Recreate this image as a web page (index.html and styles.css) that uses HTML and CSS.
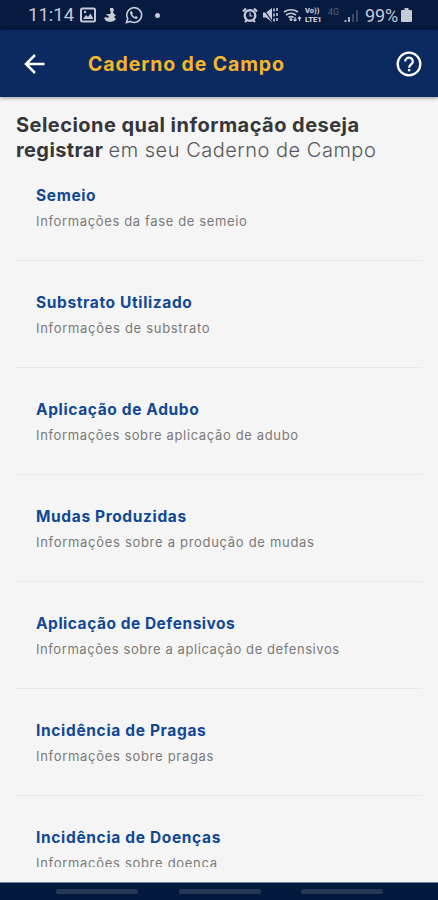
FILE: index.html
```html
<!DOCTYPE html>
<html lang="pt-BR">
<head>
<meta charset="utf-8">
<title>Caderno de Campo</title>
<link rel="stylesheet" href="styles.css">
</head>
<body>
<div class="screen">
  <div class="status">
    <span class="clock">11:14</span>
    <svg class="picture" width="16" height="16" viewBox="0 0 16 16"><rect x="1" y="1.5" width="14" height="13" rx="1.5" fill="none" stroke="currentColor" stroke-width="2"/><path d="M3 12l3-4 2 2 2.500-3.500L13.500 12z" fill="currentColor"/><circle cx="5" cy="5" r="1.200" fill="currentColor"/></svg>
    <svg class="figure" width="13" height="16" viewBox="0 0 13 16"><path d="M6 1h3l1 2-1 2 1 2 2 1-2 2 2 2-2 2-4 1-4-1-2-3 2-1 2 1 1-2-3-1 1-1h3l1-2-1-1z" fill="currentColor"/></svg>
    <svg class="chat" width="18" height="18" viewBox="0 0 18 18"><path d="M1.500 16.500l1.200-4A7.400 7.400 0 1 1 5.500 15.400z" fill="none" stroke="currentColor" stroke-width="1.600"/><path d="M6.300 4.800L5 6.200c.3 3.300 3.200 6.300 6.500 6.700l1.500-1.600-2.100-1.300-1 1c-1.300-.6-2.200-1.500-2.800-2.700l.9-1z" fill="currentColor"/></svg>
    <span class="dot"></span>
    <div class="indicators">
      <svg class="alarm" width="16" height="16" viewBox="0 0 16 16"><circle cx="8" cy="8.500" r="5.300" fill="none" stroke="currentColor" stroke-width="2.400"/><path d="M1 4.500L4 1.500M15 4.500L12 1.500M3 15l2-2M13 15l-2-2" stroke="currentColor" stroke-width="2.200"/><path d="M8 5.500V9h2.500" fill="none" stroke="currentColor" stroke-width="1.200"/></svg>
      <svg class="mute" width="16" height="16" viewBox="0 0 16 16"><path d="M1 5.500h3L10 1v14l-6-4.500H1z" fill="currentColor"/><path d="M1 1.500L10 14" stroke="#071a40" stroke-width="1.200"/><path d="M12 1.500v3M12 6.500v3M12 11.500v3M15 1v3M15 6v3M15 11v3" stroke="currentColor" stroke-width="1.600"/></svg>
      <svg class="wifi" width="19" height="16" viewBox="0 0 19 16"><g fill="none" stroke="currentColor" stroke-width="1.600"><path d="M1 5Q8 .5 15 5M3 8q5-3.500 10 0M5.500 10.500q2.500-1.800 5 0"/><path d="M12 10v4M10.500 12.500L12 14l1.500-1.500M16.500 14v-4M15 11.500l1.500-1.500 1.500 1.500" stroke-width="1.200"/></g><circle cx="8" cy="12.500" r="1.500" fill="currentColor"/></svg>
      <span class="volte"><span>Vo))</span><span>LTE1</span></span>
      <span class="network">4G</span>
      <svg class="signal" width="15" height="15" viewBox="0 0 15 15"><path d="M1.500 12v2M5 9v5" stroke="#a6adbb" stroke-width="2"/><path d="M9 6v8M13 2v12" stroke="#3a4865" stroke-width="2"/></svg>
      <span class="percent">99%</span>
      <svg class="battery" width="11" height="14" viewBox="0 0 11 14"><path d="M3.500 0h4v2H10q1 0 1 1v10q0 1-1 1H1q-1 0-1-1V3q0-1 1-1h2.500z" fill="currentColor"/></svg>
    </div>
  </div>
  <header class="bar">
    <svg class="back" width="22" height="22" viewBox="0 0 22 22"><path d="M20.500 11H2.500M11 2L2 11l9 9" fill="none" stroke="#fff" stroke-width="2.500"/></svg>
    <h1 class="title">Caderno de Campo</h1>
    <svg class="help" width="26" height="26" viewBox="0 0 26 26"><circle cx="13" cy="13" r="11.300" fill="none" stroke="#fff" stroke-width="2.300"/><path d="M9.200 10.500a3.800 3.600 0 1 1 6.500 2.300c-1.500 1.500-2.600 1.900-2.600 4" fill="none" stroke="#fff" stroke-width="2.200"/><rect x="11.900" y="18" width="2.400" height="2.300" fill="#fff"/></svg>
  </header>
  <main class="content">
    <h2 class="prompt"><span class="line">Selecione qual informação deseja</span><span class="line"><b>registrar</b> <span class="light">em seu Caderno de Campo</span></span></h2>
    <ul class="list">
      <li><strong>Semeio</strong><p>Informações da fase de semeio</p></li>
      <li><strong>Substrato Utilizado</strong><p>Informações de substrato</p></li>
      <li><strong>Aplicação de Adubo</strong><p>Informações sobre aplicação de adubo</p></li>
      <li><strong>Mudas Produzidas</strong><p>Informações sobre a produção de mudas</p></li>
      <li><strong>Aplicação de Defensivos</strong><p>Informações sobre a aplicação de defensivos</p></li>
      <li><strong>Incidência de Pragas</strong><p>Informações sobre pragas</p></li>
      <li><strong>Incidência de Doenças</strong><p>Informações sobre doença</p></li>
    </ul>
  </main>
  <nav class="navbar"><i></i><i></i><i></i></nav>
</div>
</body>
</html>
```
FILE: styles.css
```css
* { box-sizing: border-box; margin: 0; padding: 0; }
body { background: #f5f5f5; font-family: Inter, "Open Sans", sans-serif; }
.screen { width: 438px; height: 900px; display: flex; flex-direction: column; overflow: hidden; }
svg { display: block; flex: none; }
.status { height: 30px; flex: none; background: #071a40; color: #c5cad5; display: flex; align-items: center; padding-left: 28px; font-family: Roboto, sans-serif; }
.clock { font-size: 18.5px; width: 52px; letter-spacing: 0; }
.figure { margin-left: 8px; }
.chat { margin-left: 8px; }
.dot { width: 5px; height: 5px; border-radius: 50%; background: currentColor; margin-left: 12px; }
.indicators { display: flex; align-items: center; margin-left: auto; padding-right: 26px; }
.mute { margin-left: 4px; }
.wifi { margin-left: 5px; }
.volte { display: flex; flex-direction: column; width: 20px; margin-left: 3px; font-size: 7.500px; line-height: 9px; font-weight: 900; letter-spacing: 0; }
.network { font-size: 9px; width: 16px; color: #53617c; margin: -6px 0 0 3px; }
.percent { font-size: 18px; width: 35px; margin-left: 6px; letter-spacing: -0.1px; }
.battery { margin-left: 1px; }
.bar { height: 67px; flex: none; display: flex; align-items: center; background: #0d2a60; padding: 0 16px 0 24px; box-shadow: 0 1px 4px rgba(0,0,0,.4); z-index: 1; }
.title { margin-left: 42px; color: #f4b52b; font-size: 19.500px; line-height: 24px; font-weight: 700; letter-spacing: 0.880px; white-space: nowrap; }
.help { margin-left: auto; }
.content { height: 770px; flex: none; padding: 16px 16px 0; overflow: hidden; }
.prompt { font-size: 20px; line-height: 24.500px; font-weight: 700; letter-spacing: 0.460px; color: #34363a; white-space: nowrap; }
.line { display: block; }
.line b { font-weight: 700; letter-spacing: 0.400px; }
.light { font-weight: 300; letter-spacing: 0.510px; color: #55585c; }
.list { list-style: none; }
.list li { height: 107px; padding: 32px 20px 0; border-bottom: 1px solid #e7e8e8; white-space: nowrap; }
.list li:first-child { height: 99px; padding-top: 24px; }
.list li:last-child { height: 72px; border: 0; overflow: hidden; }
.list strong { display: block; font-size: 15.500px; line-height: 20px; font-weight: 700; letter-spacing: 0.630px; color: #114895; }
.list p { margin-top: 6px; font-size: 13px; line-height: 18px; font-weight: 400; letter-spacing: 0.700px; color: #7a7a7a; }
.list li:nth-child(5) strong { letter-spacing: 0.520px; }
.list li:nth-child(n+6) strong { letter-spacing: 0.660px; }
.list li:nth-child(odd) p { letter-spacing: 0.640px; }
.list li:nth-child(5) p { letter-spacing: 0.580px; }
.list li:nth-child(7) p { letter-spacing: 0.700px; }
.navbar { height: 18px; flex: none; margin-top: auto; display: flex; justify-content: space-between; align-items: center; padding: 0 55px 0 56px; background: #04193e; border-top: 1px solid #77809a; }
.navbar i { width: 82px; height: 5px; border-radius: 2px; background: #263856; }
```
